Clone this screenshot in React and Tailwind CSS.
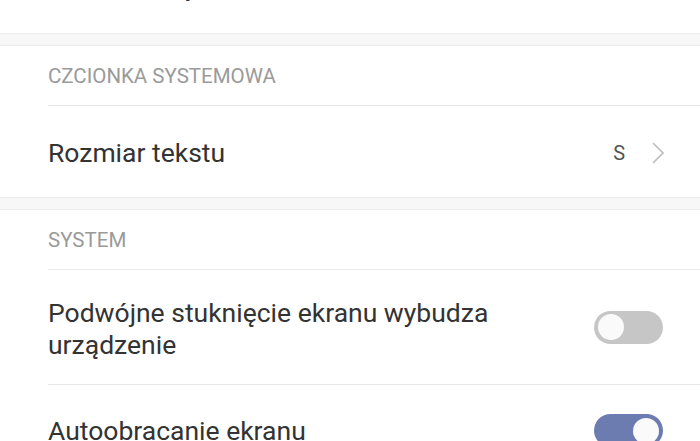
import React, { useState } from "react";

const Toggle = ({ on, onChange }) => (
  <button
    onClick={onChange}
    className={`relative shrink-0 w-[69px] h-[33px] rounded-full transition-colors ${
      on ? "bg-[#6c7bb0]" : "bg-[#c6c6c6]"
    }`}
  >
    <span
      className={`absolute top-[3.5px] w-[26px] h-[26px] rounded-full bg-[#fafafa] transition-all ${
        on ? "left-[39px]" : "left-[4px]"
      }`}
    />
  </button>
);

const Gap = () => (
  <div className="h-[13px] bg-[#f7f7f7] border-y border-[#ececec]" />
);

const Header = ({ children }) => (
  <div className="h-[59px] flex items-center pl-[48px] pt-[1px]">
    <span className="text-[20.5px] text-[#9a9a9a] uppercase">{children}</span>
  </div>
);

const App = () => {
  const [doubleTap, setDoubleTap] = useState(false);
  const [rotate, setRotate] = useState(true);

  return (
    <div
      className="w-[700px] h-[441px] overflow-hidden bg-white"
      style={{ fontFamily: "Roboto, 'Noto Sans', sans-serif" }}
    >
      {/* row cut off above */}
      <div className="h-[33px] overflow-hidden pl-[48px]">
        <div className="-mt-[29px] text-[26.5px] leading-[32px] text-[#333]">
          Czcionka styl
        </div>
      </div>

      <Gap />

      <Header>Czcionka systemowa</Header>
      <div className="ml-[48px] border-t border-[#e8e8e8]" />
      <div className="h-[91px] flex items-center pl-[48px] pr-[36px] pt-[2px]">
        <span className="flex-1 text-[26.5px] text-[#333]">Rozmiar tekstu</span>
        <span className="text-[20px] text-[#555] mr-[27px]">S</span>
        <svg width="12" height="22" viewBox="0 0 12 22" fill="none">
          <path d="M1 1l10 10L1 21" stroke="#bdbdbd" strokeWidth="1.6" />
        </svg>
      </div>

      <Gap />

      <Header>System</Header>
      <div className="ml-[48px] border-t border-[#e8e8e8]" />
      <div className="h-[114px] flex items-center pl-[48px] pr-[37px] gap-6">
        <span className="flex-1 text-[26.5px] leading-[32px] text-[#333] pt-[4px]">
          Podwójne stuknięcie ekranu wybudza urządzenie
        </span>
        <Toggle on={doubleTap} onChange={() => setDoubleTap(!doubleTap)} />
      </div>
      <div className="ml-[48px] border-t border-[#e8e8e8]" />
      <div className="h-[91px] flex items-center pl-[48px] pr-[37px] gap-6">
        <span className="flex-1 text-[26.5px] text-[#333]">Autoobracanie ekranu</span>
        <Toggle on={rotate} onChange={() => setRotate(!rotate)} />
      </div>
    </div>
  );
};

export default App;
